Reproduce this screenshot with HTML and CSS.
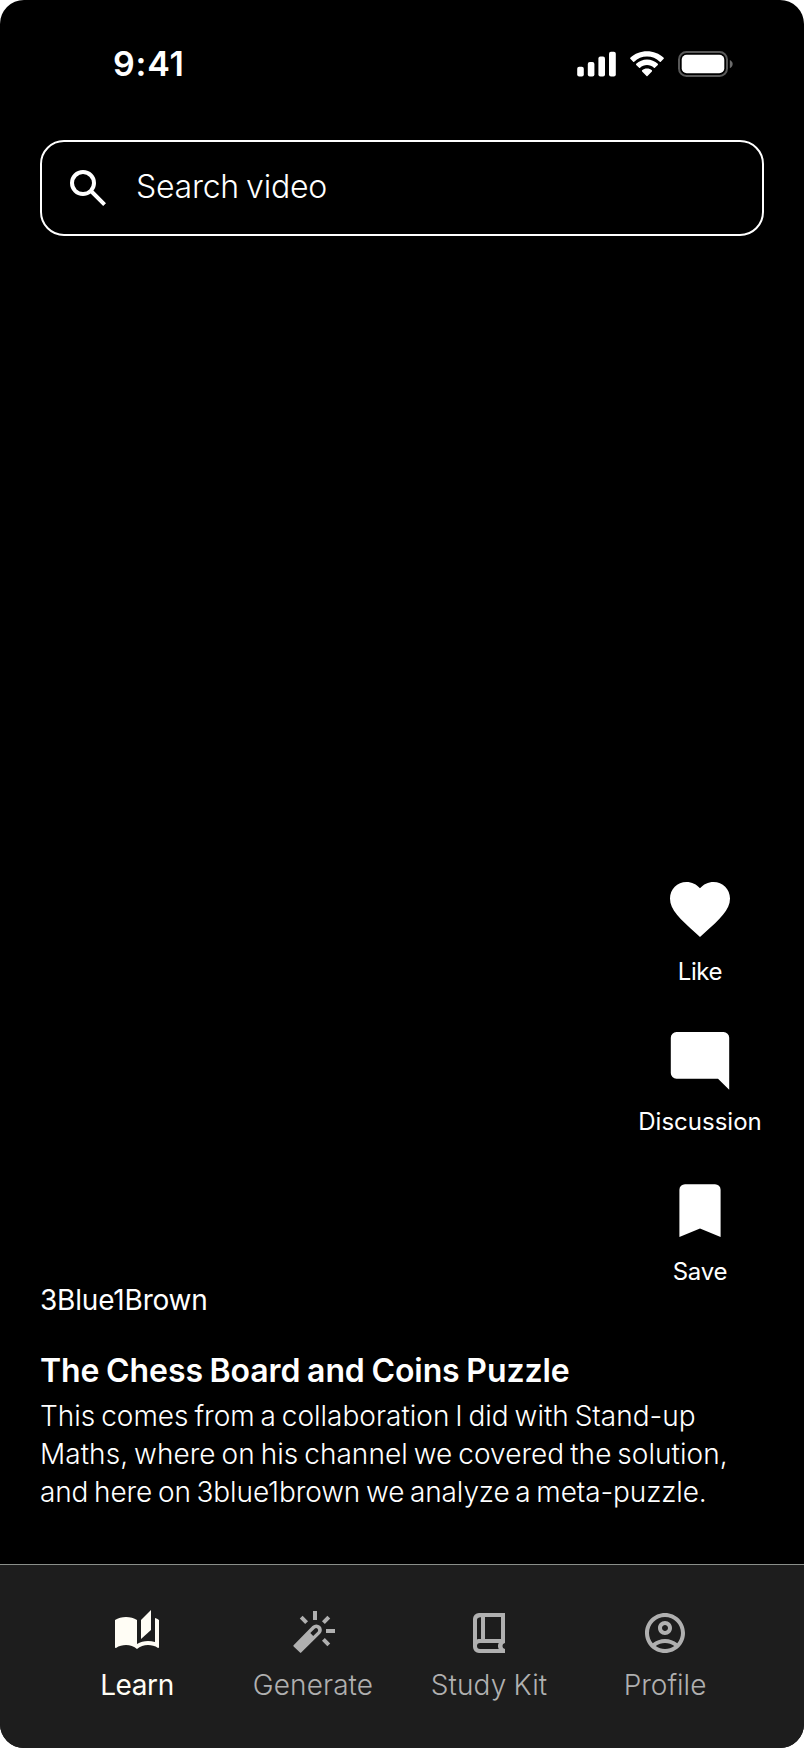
FILE: index.html
```html
<!DOCTYPE html>
<html lang="en">
<head>
<meta charset="utf-8">
<title>Learn</title>
<link rel="stylesheet" href="styles.css">
</head>
<body>
<div class="screen">
  <header class="status">
    <span class="time">9:41</span>
    <svg class="indicators" viewBox="0 0 158 28" fill="#fff">
      <rect x="1.2" y="16.7" width="6.6" height="9.7" rx="2"/>
      <rect x="11.8" y="12" width="6.6" height="14.4" rx="2"/>
      <rect x="22.4" y="6.5" width="6.6" height="19.9" rx="2"/>
      <rect x="33" y="1.7" width="6.8" height="24.7" rx="2"/>
      <path d="M71 6.6c4.9 0 9.400 1.900 12.800 5.100.3.3.7.3 1 0l2.900-2.900c.3-.3.3-.8 0-1.100C83.200 3.500 77.300 1.200 71 1.200S58.800 3.500 54.300 7.700c-.3.3-.3.8 0 1.100l2.900 2.900c.3.3.7.3 1 0C61.600 8.500 66.100 6.600 71 6.600z"/>
      <path d="M71 15.100c2.600 0 5 1 6.900 2.700.3.3.7.3 1 0l2.900-2.900c.3-.3.3-.8 0-1.100C78.900 11.200 75.100 9.600 71 9.600s-7.900 1.600-10.800 4.200c-.3.3-.3.800 0 1.100l2.900 2.900c.3.3.7.3 1 0 1.900-1.700 4.300-2.700 6.900-2.700z"/>
      <path d="M75.900 20.300c.3.3.3.8 0 1.100l-4.400 4.500c-.3.3-.7.3-1 0l-4.400-4.500c-.3-.3-.3-.8 0-1.100 1.300-1.200 3-1.800 4.900-1.800s3.600.6 4.900 1.800z"/>
      <rect x="103" y="2" width="48" height="24" rx="7.500" fill="none" stroke="#595959" stroke-width="2"/>
      <rect x="105.700" y="4.700" width="42.600" height="18.600" rx="5"/>
      <path d="M153.800 10v8.200c1.700-.7 2.900-2.300 2.900-4.100s-1.200-3.400-2.900-4.100z" fill="#6b6b6b"/>
    </svg>
  </header>

  <div class="search">
    <svg class="icon" viewBox="0 -960 960 960"><path d="M784-120 532-372q-30 24-69 38t-83 14q-109 0-184.500-75.500T120-580q0-109 75.500-184.500T380-840q109 0 184.500 75.500T640-580q0 44-14 83t-38 69l252 252-56 56ZM380-400q75 0 127.500-52.500T560-580q0-75-52.500-127.500T380-760q-75 0-127.500 52.500T200-580q0 75 52.500 127.500T380-400Z"/></svg>
    <span class="placeholder">Search video</span>
  </div>

  <main class="video">
    <div class="actions">
      <div class="action">
        <svg class="action-icon" viewBox="0 0 72 72"><path transform="scale(3)" d="M12 21.350l-1.450-1.320C5.400 15.360 2 12.280 2 8.500 2 5.420 4.420 3 7.500 3c1.740 0 3.410.81 4.500 2.090C13.090 3.810 14.760 3 16.500 3 19.580 3 22 5.420 22 8.500c0 3.780-3.400 6.860-8.550 11.540L12 21.350z"/></svg>
        <span class="like">Like</span>
      </div>
      <div class="action">
        <svg class="action-icon" viewBox="0 0 72 72"><path d="M12.500 9h47a5.700 5.700 0 0 1 5.700 5.700V66.800L54 55.700H12.500A5.700 5.700 0 0 1 6.800 50V14.700A5.700 5.700 0 0 1 12.500 9z"/></svg>
        <span class="discussion">Discussion</span>
      </div>
      <div class="action">
        <svg class="action-icon" viewBox="0 0 72 72"><path d="M21 11.200h30a5.600 5.600 0 0 1 5.600 5.600V64L36 55.500 15.400 64V16.800A5.600 5.600 0 0 1 21 11.200z"/></svg>
        <span class="save">Save</span>
      </div>
    </div>
    <section class="details">
      <p class="channel">3Blue1Brown</p>
      <h1 class="title">The Chess Board and Coins Puzzle</h1>
      <p class="description"><span>This comes from a collaboration I did with Stand-up</span><br><span class="line-wide">Maths, where on his channel we covered the solution,</span><br><span class="line-tight">and here on 3blue1brown we analyze a meta-puzzle.</span></p>
    </section>
  </main>

  <nav class="tabs">
    <a class="tab active">
      <svg class="icon" viewBox="0 0 24 24"><path d="M19 .5l-5 5V15l5-4.500V.5z"/><path d="M1 5.500C2.500 4.500 4.500 4 6.500 4s4 .5 5.500 1.500v12c1.600-1 3.500-1.500 5.500-1.500 1.200 0 2.350.15 3.500.5v-12c.7.25 1.400.55 2 1V19c0 .3-.25.5-.5.5-1.500-1.100-3.300-1.500-5-1.500-2 0-4 .7-5.500 2-1.500-1.300-3.500-2-5.500-2-1.700 0-3.500.4-5 1.500-.3 0-.5-.2-.5-.5z"/></svg>
      <span class="learn">Learn</span>
    </a>
    <a class="tab">
      <svg class="icon" viewBox="0 0 24 24"><path fill-rule="evenodd" d="M2.300 18.100 11.700 8.500a2.750 2.750 0 0 1 3.900 3.900L6.100 21.800Q5.800 22.100 5.500 21.800L2.300 18.700Q2 18.400 2.300 18.100zM10.650 12.050 12.100 13.500 14.400 11.200A1.050 1.050 0 0 0 12.950 9.750z"/><path d="M12 1h2v4.500h-2zM18.500 10H23v2h-4.500z"/><path class="ray" d="M6.100 4.100l2.700 2.700M19.900 4.100l-2.700 2.700M17.200 15.200l2.700 2.700"/></svg>
      <span class="generate">Generate</span>
    </a>
    <a class="tab">
      <svg class="icon" viewBox="0 0 24 24"><path fill-rule="evenodd" d="M7 2h13v15c-.8.200-1.250.75-1.250 1.500S19.200 19.800 20 20v2H7a3 3 0 0 1-3-3V5a3 3 0 0 1 3-3zM10 4v11h8V4zM8 4.100C7 4 6 4.500 6 5.500v9.700c.4-.15.650-.2 1-.2h1zM7.500 17a1.500 1.500 0 0 0 0 3h9.350c-.5-.9-.5-2.100 0-3z"/></svg>
      <span class="study">Study Kit</span>
    </a>
    <a class="tab">
      <svg class="icon" viewBox="0 0 24 24"><path d="M12 2C6.480 2 2 6.480 2 12s4.480 10 10 10 10-4.480 10-10S17.520 2 12 2zM7.350 18.500C8.660 17.560 10.260 17 12 17s3.340.56 4.650 1.500C15.340 19.440 13.740 20 12 20s-3.340-.56-4.650-1.500zm10.790-1.380C16.450 15.800 14.320 15 12 15s-4.450.8-6.140 2.120C4.700 15.730 4 13.950 4 12c0-4.420 3.580-8 8-8s8 3.580 8 8c0 1.950-.7 3.730-1.860 5.120zM12 6c-1.930 0-3.500 1.570-3.500 3.500S10.070 13 12 13s3.500-1.570 3.500-3.500S13.930 6 12 6zm0 5c-.83 0-1.500-.67-1.500-1.500S11.170 8 12 8s1.500.67 1.500 1.500S12.830 11 12 11z"/></svg>
      <span class="profile">Profile</span>
    </a>
  </nav>
</div>
</body>
</html>
```
FILE: styles.css
```css
* { box-sizing: border-box; }
body { margin: 0; background: #fff; font-family: Inter, "Liberation Sans", sans-serif; }
svg { display: block; flex: none; fill: currentColor; }
p, h1 { margin: 0; }

.screen {
  width: 804px;
  height: 1748px;
  display: flex;
  flex-direction: column;
  overflow: hidden;
  border-radius: 24px;
  background: #000;
  color: #fff;
  white-space: nowrap;
}

.status {
  height: 140px;
  padding: 44px 70px 0 113px;
  display: flex;
  justify-content: space-between;
  align-items: flex-start;
}
.time { font-size: 34px; font-weight: 600; line-height: 40px; letter-spacing: 0.8px; }
.indicators { width: 158px; height: 28px; margin-top: 6px; }

.search {
  height: 96px;
  margin: 0 40px;
  padding: 0 22px;
  display: flex;
  align-items: center;
  gap: 24px;
  border: 2px solid #fff;
  border-radius: 24px;
}
.icon { width: 48px; height: 48px; }
.placeholder {
  padding-bottom: 4px;
  font-size: 32px;
  font-weight: 300;
  letter-spacing: -0.25px;
  word-spacing: -1.5px;
}

.video {
  flex: 1;
  display: flex;
  flex-direction: column;
  justify-content: flex-end;
  padding: 0 40px 53px;
}
.actions {
  align-self: flex-end;
  width: 128px;
  margin-bottom: -12px;
  display: flex;
  flex-direction: column;
  gap: 30px;
}
.action {
  height: 120px;
  display: flex;
  flex-direction: column;
  align-items: center;
  gap: 8px;
  font-size: 24px;
  line-height: 38px;
}
.action-icon { width: 72px; height: 72px; }
.like { letter-spacing: -0.4px; }
.save { letter-spacing: -0.2px; }

.channel { font-size: 28px; line-height: 38px; letter-spacing: -0.2px; }
.title {
  margin-top: 30px;
  font-size: 32px;
  font-weight: 600;
  line-height: 44px;
  letter-spacing: -0.1px;
  word-spacing: -1.2px;
}
.description {
  margin-top: 4px;
  font-size: 28px;
  font-weight: 300;
  line-height: 38px;
  word-spacing: -2px;
}
.line-wide { letter-spacing: 0.05px; }
.line-tight { letter-spacing: -0.12px; }

.tabs {
  height: 184px;
  padding: 44px 49px 0;
  display: grid;
  grid-template-columns: repeat(4, 176px);
  border-top: 1px solid #8a8f8a;
  background: #1d1d1d;
}
.tab {
  display: flex;
  flex-direction: column;
  align-items: center;
  gap: 9px;
  color: #b0b0b0;
  font-size: 28px;
  font-weight: 300;
  line-height: 38px;
}
.active { color: #fffdf5; font-weight: 400; }
.learn { letter-spacing: -0.4px; }
.generate { letter-spacing: 0.1px; }
.study { letter-spacing: 0.15px; word-spacing: -1px; }
.ray { stroke: currentColor; stroke-width: 2; }
```
